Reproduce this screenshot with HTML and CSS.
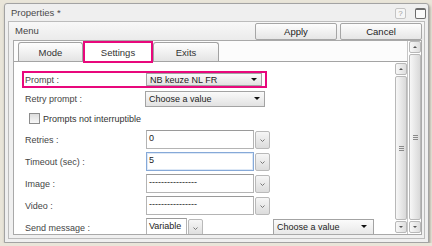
FILE: index.html
```html
<!DOCTYPE html>
<html lang="en">
<head>
<meta charset="UTF-8" />
<meta name="viewport" content="width=device-width, initial-scale=1" />
<title>Properties</title>
<link rel="stylesheet" href="styles.css">
</head>
<body>
<div class="okno">
  <div class="tytul">
    <span>Properties *</span>
    <div class="ikony">
      <span class="ikona pomoc">?</span>
      <span class="ikona max"></span>
    </div>
  </div>

  <div class="panel">
    <div class="panel-head">
      <span class="nazwa">Menu</span>
      <button class="btn">Apply</button>
      <button class="btn">Cancel</button>
    </div>

    <div class="panel-body">
      <div class="karty">
        <div class="zakladki">
          <div class="tab">Mode</div>
          <div class="tab active">Settings</div>
          <div class="tab">Exits</div>
        </div>

        <div class="tresc">
          <div class="form">
            <div class="row wyroznij">
              <label>Prompt :</label>
              <div class="select s1">NB keuze NL FR<span class="arrow"></span></div>
            </div>
            <div class="row r-select">
              <label>Retry prompt :</label>
              <div class="select s2">Choose a value<span class="arrow"></span></div>
            </div>
            <div class="row r-check">
              <span class="checkbox"></span>
              <span class="check-text">Prompts not interruptible</span>
            </div>
            <div class="row r-input first">
              <label>Retries :</label>
              <div class="input">0</div>
              <span class="drop"><svg width="5" height="3" viewBox="0 0 5 3"><path d="M0.5 0.5 L2.5 2.5 L4.5 0.5" fill="none" stroke="#777" stroke-width="1"/></svg></span>
            </div>
            <div class="row r-input">
              <label>Timeout (sec) :</label>
              <div class="input focus">5</div>
              <span class="drop"><svg width="5" height="3" viewBox="0 0 5 3"><path d="M0.5 0.5 L2.5 2.5 L4.5 0.5" fill="none" stroke="#777" stroke-width="1"/></svg></span>
            </div>
            <div class="row r-input">
              <label>Image :</label>
              <div class="input">----------------</div>
              <span class="drop"><svg width="5" height="3" viewBox="0 0 5 3"><path d="M0.5 0.5 L2.5 2.5 L4.5 0.5" fill="none" stroke="#777" stroke-width="1"/></svg></span>
            </div>
            <div class="row r-input">
              <label>Video :</label>
              <div class="input">----------------</div>
              <span class="drop"><svg width="5" height="3" viewBox="0 0 5 3"><path d="M0.5 0.5 L2.5 2.5 L4.5 0.5" fill="none" stroke="#777" stroke-width="1"/></svg></span>
            </div>
            <div class="row r-input">
              <label>Send message :</label>
              <div class="input krotki">Variable</div>
              <span class="drop"><svg width="5" height="3" viewBox="0 0 5 3"><path d="M0.5 0.5 L2.5 2.5 L4.5 0.5" fill="none" stroke="#777" stroke-width="1"/></svg></span>
              <div class="select s3">Choose a value<span class="arrow"></span></div>
            </div>
          </div>

          <div class="scroll wewn">
            <div class="sb-btn up"></div>
            <div class="sb-thumb"><span class="grip"></span></div>
            <div class="sb-btn down"></div>
          </div>
        </div>
      </div>

      <div class="scroll zewn">
        <div class="sb-btn up"></div>
        <div class="sb-thumb"><span class="grip"></span></div>
        <div class="sb-btn down"></div>
      </div>
    </div>
  </div>
</div>
</body>
</html>
```

FILE: styles.css
```css
body {
  margin: 0;
  background: #e9e5d9;
  font-family: "Liberation Sans", Arial, sans-serif;
  font-size: 9px;
  color: #454545;
}
.okno {
  margin: 3px 0 0 4px;
  width: 423px;
  height: 238px;
  border: 1px solid #a3a3a3;
  border-radius: 3px 3px 0 0;
  background: #efefef;
  box-shadow: 1px 2px 3px rgba(0,0,0,0.35);
  display: flex;
  flex-direction: column;
}
.tytul {
  height: 17px;
  flex-shrink: 0;
  display: flex;
  align-items: center;
  justify-content: space-between;
  padding: 0 2px 0 6px;
  font-size: 9.5px;
  color: #4a4a4a;
}
.ikony {
  display: flex;
  gap: 9px;
  margin-top: 1px;
}
.ikona {
  width: 9px;
  height: 9px;
  border: 1px solid #c4c4c4;
  border-radius: 2px;
  background: #f6f6f6;
  font-size: 8px;
  line-height: 9px;
  text-align: center;
  color: #a0a0a0;
}
.ikona.max {
  border-color: #6c6c6c;
  border-top-width: 2px;
  height: 8px;
  background: #fafafa;
}

/* panel Menu */
.panel {
  flex: 1;
  min-height: 0;
  margin: 0 3px 3px;
  border: 1px solid #bcbcbc;
  background: #f0f0f0;
  display: flex;
  flex-direction: column;
}
.panel-head {
  height: 18px;
  flex-shrink: 0;
  display: flex;
  align-items: flex-start;
  gap: 3px;
  padding: 0 2px 0 6px;
  background: linear-gradient(#f8f8f8, #ebebeb);
}
.nazwa {
  flex: 1;
  line-height: 17px;
  font-size: 9.5px;
  color: #454545;
}
.btn {
  margin-top: 1px;
  width: 82px;
  height: 17px;
  padding: 0;
  border: 1px solid #a6a6a6;
  border-radius: 2px;
  background: linear-gradient(#fdfdfd, #e6e6e6);
  font-family: inherit;
  font-size: 9.5px;
  color: #222;
}
.panel-body {
  flex: 1;
  min-height: 0;
  margin: 0 2px 3px 4px;
  border: 1px solid #a9a9a9;
  background: #fff;
  display: flex;
  overflow: hidden;
}
.karty {
  width: 393px;
  border-right: 1px solid #c6c6c6;
  display: flex;
  flex-direction: column;
}
.zakladki {
  height: 20px;
  flex-shrink: 0;
  border-bottom: 1px solid #a4a4a4;
  display: flex;
  align-items: flex-end;
  padding-left: 4px;
  background: #fcfcfc;
}
.tab {
  width: 63px;
  height: 18px;
  border: 1px solid #a2a2a2;
  border-bottom: none;
  border-radius: 3px 3px 0 0;
  background: linear-gradient(#fefefe, #e4e4e4);
  text-align: center;
  line-height: 19px;
  font-size: 9.5px;
  color: #333;
}
.tab.active {
  width: 66px;
  height: 18px;
  border: 2px solid #e8087c;
  border-radius: 0;
  margin-bottom: -2px;
  background: #fff;
  position: relative;
  z-index: 1;
}
.tab.active + .tab {
  width: 64px;
}

/* formularz */
.tresc {
  flex: 1;
  display: flex;
  min-height: 0;
}
.form {
  flex: 1;
  padding: 9px 0 0 11px;
  overflow: hidden;
}
.row {
  display: flex;
  align-items: center;
}
.row label {
  width: 120px;
  flex-shrink: 0;
}
.wyroznij {
  width: 239px;
  height: 13px;
  margin-left: -3px;
  padding: 0 1px;
  border: 2px solid #e8087c;
}
.wyroznij label {
  width: 121px;
}
.select {
  height: 100%;
  box-sizing: border-box;
  border: 1px solid #a3a3a3;
  background: linear-gradient(#fafafa, #e2e2e2);
  padding-left: 3px;
  color: #222;
  display: flex;
  align-items: center;
  position: relative;
}
.s1 {
  width: 116px;
}
.r-select {
  margin-top: 3px;
  height: 16px;
}
.s2 {
  width: 120px;
}
.arrow {
  position: absolute;
  right: 4px;
  top: 50%;
  margin-top: -2px;
  border-left: 3px solid transparent;
  border-right: 3px solid transparent;
  border-top: 3px solid #111;
}
.r-check {
  margin-top: 5px;
  height: 13px;
}
.checkbox {
  width: 9px;
  height: 9px;
  margin-left: 4px;
  border: 1px solid #8c8c8c;
  background: linear-gradient(#dcdcdc, #f8f8f8);
}
.check-text {
  margin-left: 3px;
  color: #333;
}
.r-input {
  margin-top: 3px;
  height: 19px;
  align-items: flex-start;
}
.r-input.first {
  margin-top: 5px;
}
.r-input label {
  align-self: center;
}
.input {
  width: 108px;
  height: 19px;
  box-sizing: border-box;
  margin-left: 1px;
  border: 1px solid #b4b4b4;
  border-top-color: #9a9a9a;
  padding: 2px 0 0 2px;
  color: #222;
  background: #fff;
}
.input.focus {
  border-color: #86a9d8;
  box-shadow: inset 0 0 0 1px #dde8f6;
}
.input.krotki {
  width: 41px;
}
.drop {
  width: 13px;
  height: 16px;
  margin: 1px 0 0 1px;
  border: 1px solid #b9b9b9;
  border-radius: 2px;
  background: linear-gradient(#f6f6f6, #dcdcdc);
  display: flex;
  align-items: center;
  justify-content: center;
}
.s3 {
  width: 101px;
  height: 16px;
  margin: 1px 0 0 70px;
  background: linear-gradient(#fbfbfb, #e8e8e8);
}
.s3 .arrow {
  right: 6px;
}

/* paski przewijania */
.scroll {
  width: 12px;
  flex-shrink: 0;
  display: flex;
  flex-direction: column;
  gap: 1px;
}
.scroll.wewn {
  padding: 1px 0 1px;
}
.scroll.zewn {
  margin-left: 1px;
  padding-bottom: 1px;
}
.sb-btn {
  height: 10px;
  flex-shrink: 0;
  border: 1px solid #b8b8b8;
  border-radius: 2px;
  background: linear-gradient(90deg, #f7f7f7, #dedede);
  position: relative;
}
.sb-btn::after {
  content: "";
  position: absolute;
  left: 3px;
  top: 4px;
  border-left: 2px solid transparent;
  border-right: 2px solid transparent;
}
.sb-btn.up::after {
  border-bottom: 2px solid #555;
}
.sb-btn.down::after {
  border-top: 2px solid #555;
}
.sb-thumb {
  flex: 1;
  border: 1px solid #b8b8b8;
  border-radius: 2px;
  background: linear-gradient(90deg, #f7f7f7, #d9d9d9);
  display: flex;
  align-items: center;
  justify-content: center;
}
.grip {
  width: 5px;
  height: 5px;
  background: repeating-linear-gradient(#8a8a8a 0 1px, transparent 1px 2px);
}
```
